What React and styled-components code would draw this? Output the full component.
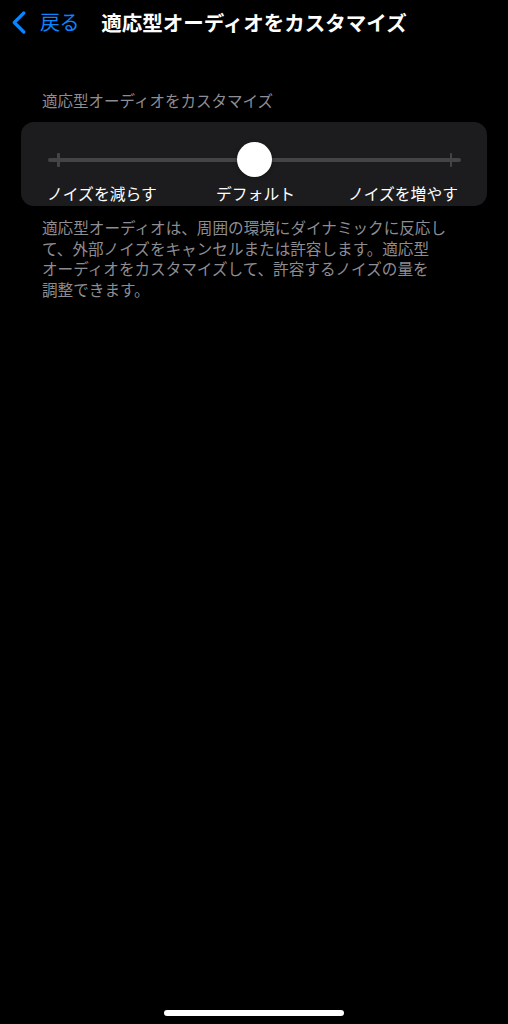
import React from "react";
import styled, { createGlobalStyle } from "styled-components";

const Global = createGlobalStyle`
  html, body { margin: 0; padding: 0; background: #000; }
  body {
    font-family: "Noto Sans CJK JP", "Noto Sans", sans-serif;
    -webkit-font-smoothing: antialiased;
  }
`;

const Screen = styled.div`
  min-height: 1024px;
  background: #000;
  display: flex;
  flex-direction: column;
  color: #fff;
`;

const NavBar = styled.header`
  height: 44px;
  display: grid;
  grid-template-columns: 1fr auto 1fr;
  align-items: center;
`;

const BackButton = styled.button`
  justify-self: start;
  display: flex;
  align-items: center;
  gap: 14px;
  margin: 0;
  padding: 0 0 0 11px;
  border: none;
  background: none;
  color: #0a84ff;
  font-family: inherit;
  font-size: 20px;
  line-height: 24px;
  letter-spacing: -0.5px;
  svg { display: block; }
`;

const Title = styled.h1`
  margin: 0;
  font-size: 20.5px;
  font-weight: 700;
  line-height: 24px;
  color: #fff;
  white-space: nowrap;
`;

const Content = styled.main`
  padding: 46px 21px 0;
`;

const SectionHeader = styled.div`
  padding: 0 21px;
  font-size: 15.5px;
  line-height: 20px;
  color: #8d8d93;
`;

const Card = styled.section`
  margin-top: 12px;
  height: 84px;
  box-sizing: border-box;
  background: #1c1c1e;
  border-radius: 13px;
  padding: 0 26px 0 27px;
  display: flex;
  flex-direction: column;
`;

const Track = styled.div`
  position: relative;
  margin-top: 36px;
  height: 4px;
  border-radius: 2px;
  background: #444446;
`;

const Tick = styled.span`
  position: absolute;
  top: -5px;
  ${(p) => (p.$side === "left" ? "left: 9px;" : "right: 9px;")}
  width: 2.5px;
  height: 14px;
  border-radius: 1px;
  background: #444446;
`;

const Thumb = styled.span`
  position: absolute;
  left: 50%;
  top: 50%;
  width: 35px;
  height: 35px;
  margin: -18.5px 0 0 -17.5px;
  border-radius: 50%;
  background: #fff;
  box-shadow: 0 1px 4px rgba(0, 0, 0, 0.35);
`;

const Labels = styled.div`
  margin-top: 22px;
  margin-left: -1px;
  margin-right: 3px;
  display: grid;
  grid-template-columns: 1fr auto 1fr;
  align-items: center;
  font-size: 15.8px;
  line-height: 20px;
  color: #fff;
`;

const Label = styled.span`
  justify-self: ${(p) => p.$align || "center"};
  margin-left: ${(p) => (p.$align ? "0" : "6px")};
  white-space: nowrap;
`;

const Footer = styled.p`
  margin: 11px 0 0;
  padding: 0 21px;
  font-size: 15.6px;
  line-height: 20.7px;
  color: #8d8d93;
  white-space: nowrap;
`;

const HomeIndicator = styled.div`
  margin: auto auto 8px;
  width: 180px;
  height: 6px;
  border-radius: 3px;
  background: #fff;
`;

const Chevron = () => (
  <svg width="15" height="23" viewBox="0 0 15 23" fill="none">
    <path
      d="M12.8 2 L3.3 11.5 L12.8 21"
      stroke="#0a84ff"
      strokeWidth="3.2"
      strokeLinecap="round"
      strokeLinejoin="round"
    />
  </svg>
);

export default function App() {
  return (
    <>
      <Global />
      <Screen>
        <NavBar>
          <BackButton>
            <Chevron />
            <span>戻る</span>
          </BackButton>
          <Title>適応型オーディオをカスタマイズ</Title>
          <span />
        </NavBar>
        <Content>
          <SectionHeader>適応型オーディオをカスタマイズ</SectionHeader>
          <Card>
            <Track>
              <Tick $side="left" />
              <Tick $side="right" />
              <Thumb />
            </Track>
            <Labels>
              <Label $align="start">ノイズを減らす</Label>
              <Label>デフォルト</Label>
              <Label $align="end">ノイズを増やす</Label>
            </Labels>
          </Card>
          <Footer>
            適応型オーディオは、周囲の環境にダイナミックに反応し
            <br />
            て、外部ノイズをキャンセルまたは許容します。適応型
            <br />
            オーディオをカスタマイズして、許容するノイズの量を
            <br />
            調整できます。
          </Footer>
        </Content>
        <HomeIndicator />
      </Screen>
    </>
  );
}
